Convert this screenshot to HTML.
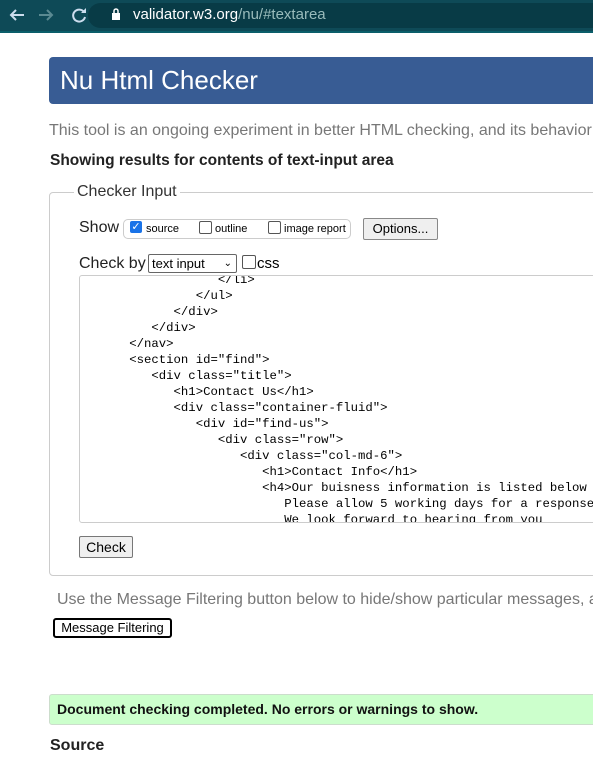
<!DOCTYPE html>
<html><head><style>
body{margin:0;width:593px;height:760px;overflow:hidden;background:#fff;font-family:"Liberation Sans",sans-serif;position:relative}
.a{position:absolute;white-space:nowrap}
.code{font-family:"Liberation Mono",monospace;font-size:12.3px;color:#000;line-height:16px}
.cb{display:inline-block;width:11px;height:11px;border:1px solid #555;border-radius:2px;vertical-align:-1px;background:#fff}
</style></head><body>
<div class="a" style="left:0;top:0;width:593px;height:32px;background:#0e4a57"></div>
<div class="a" style="left:0;top:31px;width:593px;height:2px;background:#0b5e6a"></div>
<div class="a" style="left:88px;top:3px;width:520px;height:25px;border-radius:13px;background:#083b46"></div>
<svg class="a" style="left:4px;top:4px" width="90" height="22" viewBox="0 0 90 22">
<path d="M20 11H7M12 6l-5 5 5 5" stroke="#cde" stroke-width="2" fill="none"/>
<path d="M35 11h13M43 6l5 5-5 5" stroke="#5a8a92" stroke-width="2" fill="none"/>
<path d="M80 8a6 6 0 1 0 1 5" stroke="#cde" stroke-width="2" fill="none"/><path d="M82 4v5h-5z" fill="#cde"/>
</svg>
<svg class="a" style="left:111px;top:8px" width="10" height="13"><rect x="1" y="5" width="8" height="7" fill="#fff"/><path d="M3 5V3a2 2 0 0 1 4 0v2" stroke="#fff" stroke-width="1.5" fill="none"/></svg>
<div class="a" style="left:133px;top:6px;font-size:15px;color:#fff">validator.w3.org<span style="color:#9bb">/nu/#textarea</span></div>

<div class="a" style="left:49px;top:57px;width:560px;height:47px;background:#385c94;border-radius:4px"></div>
<div class="a" style="left:60px;top:65px;font-size:26px;color:#fff">Nu Html Checker</div>
<div class="a" style="left:49px;top:122px;font-size:16px;color:#777">This tool is an ongoing experiment in better HTML checking, and its behavior</div>
<div class="a" style="left:50px;top:152px;font-size:15.5px;font-weight:bold;color:#222">Showing results for contents of text-input area</div>

<div class="a" style="left:49px;top:192px;width:560px;height:382px;border:1px solid #ccc;border-radius:4px"></div>
<div class="a" style="left:74px;top:183px;background:#fff;padding:0 3px;font-size:16px;color:#333">Checker Input</div>
<div class="a" style="left:79px;top:219px;font-size:16px;color:#222">Show</div>
<div class="a" style="left:123px;top:219px;width:226px;height:18px;border:1px solid #ccc;border-radius:5px"></div>
<div class="a" style="left:130px;top:221px;width:12px;height:12px;background:#1a73e8;border-radius:2px;color:#fff;font-size:11px;line-height:12px;text-align:center">✓</div>
<div class="a" style="left:146px;top:223px;font-size:11px">source</div>
<div class="a" style="left:199px;top:220px"><span class="cb"></span></div>
<div class="a" style="left:215px;top:223px;font-size:11px">outline</div>
<div class="a" style="left:268px;top:220px"><span class="cb"></span></div>
<div class="a" style="left:284px;top:223px;font-size:11px">image report</div>
<div class="a" style="left:363px;top:218px;width:73px;height:20px;border:1px solid #888;border-radius:2px;background:#efefef;font-size:13px;line-height:20px;text-align:center">Options...</div>

<div class="a" style="left:79px;top:255px;font-size:16px;color:#222">Check by</div>
<div class="a" style="left:148px;top:254px;width:84px;height:17px;border:1px solid #666;border-radius:2px;font-size:13px;line-height:17px;padding-left:3px;box-sizing:content-box">text input <span style="font-size:10px;position:absolute;right:4px">&#x2304;</span></div>
<div class="a" style="left:242px;top:255px"><span class="cb" style="width:12px;height:12px"></span></div>
<div class="a" style="left:257px;top:255px;font-size:15px">css</div>

<div class="a" style="left:79px;top:275px;width:530px;height:246px;border:1px solid #ccc;border-radius:3px;overflow:hidden">
<pre class="code" style="margin:0;position:absolute;left:5px;top:-4px">                  &lt;/li&gt;
               &lt;/ul&gt;
            &lt;/div&gt;
         &lt;/div&gt;
      &lt;/nav&gt;
      &lt;section id="find"&gt;
         &lt;div class="title"&gt;
            &lt;h1&gt;Contact Us&lt;/h1&gt;
            &lt;div class="container-fluid"&gt;
               &lt;div id="find-us"&gt;
                  &lt;div class="row"&gt;
                     &lt;div class="col-md-6"&gt;
                        &lt;h1&gt;Contact Info&lt;/h1&gt;
                        &lt;h4&gt;Our buisness information is listed below
                           Please allow 5 working days for a response
                           We look forward to hearing from you</pre>
</div>
<div class="a" style="left:79px;top:536px;width:52px;height:20px;border:1px solid #777;border-radius:2px;background:#efefef;font-size:14px;line-height:20px;text-align:center">Check</div>

<div class="a" style="left:57px;top:591px;font-size:16px;color:#777">Use the Message Filtering button below to hide/show particular messages, a</div>
<div class="a" style="left:53px;top:618px;width:115px;height:16px;border:2px solid #000;border-radius:3px;font-size:13px;line-height:16px;text-align:center">Message Filtering</div>

<div class="a" style="left:49px;top:694px;width:560px;height:29px;background:#ccffcc;border:1px solid #cdc;border-radius:3px"></div>
<div class="a" style="left:57px;top:701px;font-size:14px;font-weight:bold;color:#111">Document checking completed. No errors or warnings to show.</div>
<div class="a" style="left:50px;top:737px;font-size:16px;font-weight:bold;color:#222">Source</div>
</body></html>
